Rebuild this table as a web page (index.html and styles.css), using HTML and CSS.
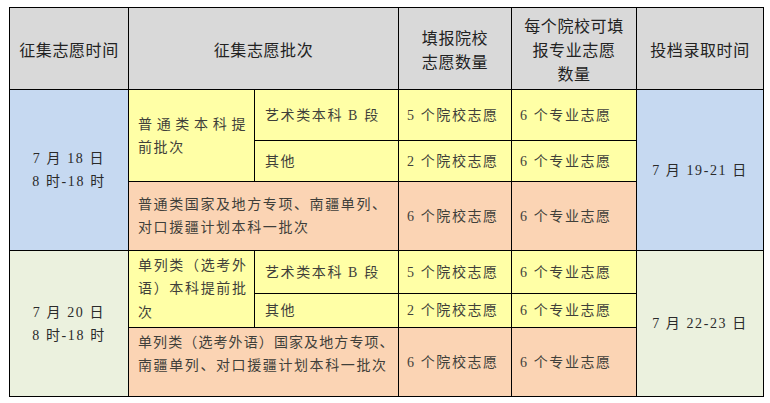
FILE: index.html
```html
<!DOCTYPE html>
<html lang="zh-CN">
<head>
<meta charset="utf-8">
<title>征集志愿安排</title>
<link rel="stylesheet" href="styles.css">
</head>
<body>
<div class="wrap">
<table class="plan">
  <colgroup>
    <col class="c1"><col class="c2"><col class="c3"><col class="c4"><col class="c5"><col class="c6">
  </colgroup>
  <thead>
    <tr class="rh">
      <th>征集志愿时间</th>
      <th colspan="2">征集志愿批次</th>
      <th>填报院校<br>志愿数量</th>
      <th>每个院校可填<br>报专业志愿<br>数量</th>
      <th>投档录取时间</th>
    </tr>
  </thead>
  <tbody>
    <tr class="ra1">
      <td rowspan="3" class="date blue">7 月 18 日<br>8 时-18 时</td>
      <td rowspan="2" class="batch yellow"><span class="jl">普通类本科提</span><span class="ln">前批次</span></td>
      <td class="sub yellow">艺术类本科 B 段</td>
      <td class="num yellow">5 个院校志愿</td>
      <td class="num yellow">6 个专业志愿</td>
      <td rowspan="3" class="date blue">7 月 19-21 日</td>
    </tr>
    <tr class="ra2">
      <td class="sub yellow">其他</td>
      <td class="num yellow">2 个院校志愿</td>
      <td class="num yellow">6 个专业志愿</td>
    </tr>
    <tr class="ra3">
      <td colspan="2" class="batch orange">普通类国家及地方专项、南疆单列、<br>对口援疆计划本科一批次</td>
      <td class="num orange">6 个院校志愿</td>
      <td class="num orange">6 个专业志愿</td>
    </tr>
    <tr class="rb1">
      <td rowspan="3" class="date green">7 月 20 日<br>8 时-18 时</td>
      <td rowspan="2" class="batch yellow tight"><span class="jl">单列类（选考外</span><span class="jl">语）本科提前批</span><span class="ln">次</span></td>
      <td class="sub yellow">艺术类本科 B 段</td>
      <td class="num yellow">5 个院校志愿</td>
      <td class="num yellow">6 个专业志愿</td>
      <td rowspan="3" class="date green">7 月 22-23 日</td>
    </tr>
    <tr class="rb2">
      <td class="sub yellow">其他</td>
      <td class="num yellow">2 个院校志愿</td>
      <td class="num yellow">6 个专业志愿</td>
    </tr>
    <tr class="rb3">
      <td colspan="2" class="batch orange top"><span class="nar">单列类（选考外语）国家及地方专项、</span><br>南疆单列、对口援疆计划本科一批次</td>
      <td class="num orange">6 个院校志愿</td>
      <td class="num orange">6 个专业志愿</td>
    </tr>
  </tbody>
</table>
</div>
</body>
</html>
```

FILE: styles.css
```css
html, body {
  margin: 0;
  padding: 0;
  background: #ffffff;
}

.wrap {
  padding: 7px 0 0 9px;
}

.plan {
  border-collapse: collapse;
  table-layout: fixed;
  width: 755px;
  font-family: "Liberation Serif", "Noto Sans CJK SC", serif;
  font-size: 14px;
  color: #3f3f3a;
}

.c1 { width: 119px; }
.c2 { width: 126px; }
.c3 { width: 144px; }
.c4 { width: 113px; }
.c5 { width: 125px; }
.c6 { width: 127px; }

.plan th,
.plan td {
  border: 1px solid #000;
  padding: 0;
  white-space: nowrap;
  overflow: hidden;
}

.plan th {
  background: #d9d9d9;
  font-family: "Noto Sans CJK SC", sans-serif;
  font-weight: normal;
  font-size: 16px;
  line-height: 24px;
  letter-spacing: 0.6px;
  color: #222;
  text-align: center;
  vertical-align: middle;
}

.rh { height: 82px; }
.ra1 { height: 51px; }
.ra2 { height: 41px; }
.ra3 { height: 69px; }
.rb1 { height: 43px; }
.rb2 { height: 34px; }
.rb3 { height: 69px; }

.plan td {
  line-height: 23px;
  letter-spacing: 1.6px;
  vertical-align: middle;
}

.blue { background: #c6d9f1; }
.green { background: #ebf1de; }
.yellow { background: #ffffa6; }
.orange { background: #fbd4b4; }

.date {
  text-align: center;
  line-height: 24px;
  letter-spacing: 0.4px;
  color: #2a2a2a;
}

.batch {
  text-align: left;
  padding-left: 9px !important;
  padding-right: 7px !important;
}

.batch.tight {
  letter-spacing: 1px;
  line-height: 23.5px;
}

.jl {
  display: block;
  text-align: justify;
  text-align-last: justify;
}

.ln {
  display: block;
}

.nar {
  letter-spacing: 1.1px;
}

.top {
  vertical-align: top !important;
  padding-top: 3px !important;
}

.sub {
  text-align: left;
  padding-left: 10px !important;
}

.num {
  text-align: left;
  padding-left: 8px !important;
}
```
